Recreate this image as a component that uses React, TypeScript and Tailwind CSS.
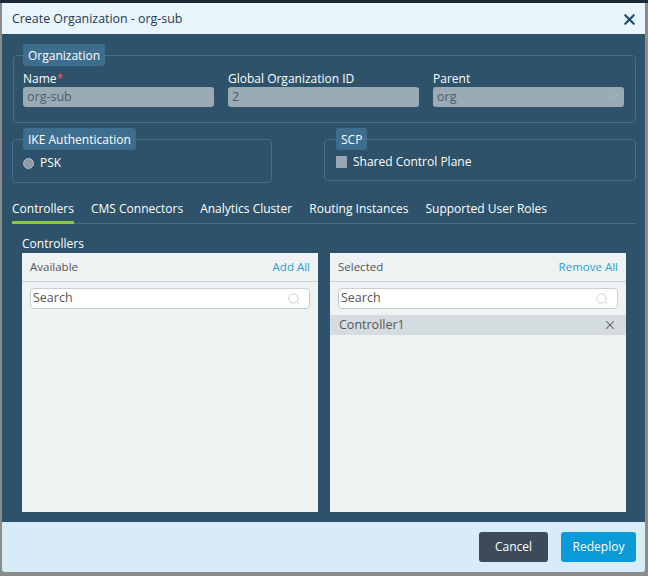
import { X, Search, ChevronDown } from 'lucide-react'

const tabs = ['Controllers', 'CMS Connectors', 'Analytics Cluster', 'Routing Instances', 'Supported User Roles']

function Field({ label, value, required, select }: { label: string; value: string; required?: boolean; select?: boolean }) {
  return (
    <div className="flex flex-col">
      <label className="text-[12px] leading-[16px] text-white">
        {label}
        {required && <span className="text-[#e8566b]">*</span>}
      </label>
      <div className="h-[20px] rounded-[3px] bg-[#9aabb6] px-[4px] flex items-center justify-between text-[12.5px] text-[#4b5e6b]">
        <span>{value}</span>
        {select && <ChevronDown size={12} className="text-[#aab8c1]" />}
      </div>
    </div>
  )
}

function ListPanel({ title, action, items }: { title: string; action: string; items: string[] }) {
  return (
    <div className="flex flex-col bg-[#eef2f3]">
      <div className="h-[29px] px-[8px] flex items-center justify-between border-b border-[#c9d0d4] text-[11.5px]">
        <span className="text-[#555]">{title}</span>
        <span className="text-[#2b9ed8]">{action}</span>
      </div>
      <div className="mx-[8px] mt-[6px] h-[21px] bg-white border border-[#c8cfd3] rounded-[4px] flex items-center justify-between pl-[2px] pr-[8px]">
        <span className="text-[12.5px] text-[#555]">Search</span>
        <Search size={14} strokeWidth={1.1} className="text-[#b4bcc1]" />
      </div>
      <div className="mt-[6px] flex flex-col">
        {items.map((it) => (
          <div key={it} className="h-[20px] bg-[#d4dcdf] pl-[9px] pr-[9px] flex items-center justify-between text-[12.5px] text-[#555]">
            <span>{it}</span>
            <X size={14} strokeWidth={1.8} className="text-[#555]" />
          </div>
        ))}
      </div>
    </div>
  )
}

export default function App() {
  return (
    <div
      className="w-[648px] h-[576px] bg-[#8b8b8b] border-t-[3px] border-[#1b2a36] pl-[2px] pr-[3px] pb-[4px]"
      style={{ fontFamily: '"Open Sans", "Noto Sans", sans-serif' }}
    >
      <div className="h-full flex flex-col rounded-b-[3px] overflow-hidden">
        {/* Header */}
        <div className="h-[31px] shrink-0 bg-[#e9f5fc] pl-[10px] pr-[7px] pt-[1px] flex items-center justify-between">
          <span className="text-[12.4px] text-[#1d3a52]">Create Organization - org-sub</span>
          <X size={17} strokeWidth={3} className="text-[#1a4d6e]" />
        </div>

        {/* Body */}
        <div className="flex-1 bg-[#2d5269] pl-[10px] pr-[9px] pt-[10px]">
          <fieldset className="ml-[1px] border border-[#41708c] rounded-[4px] pl-[9px] pr-[11px] pb-[15px]">
            <legend className="h-[22px] px-[5px] pt-[1px] rounded-[3px] bg-[#3e6e8d] text-[12px] leading-[21px] text-white">
              Organization
            </legend>
            <div className="grid grid-cols-3 gap-x-[14px] pt-[5px]">
              <Field label="Name" value="org-sub" required />
              <Field label="Global Organization ID" value="2" />
              <Field label="Parent" value="org" select />
            </div>
          </fieldset>

          <div className="mt-[5px] flex justify-between items-start">
            <fieldset className="w-[260px] border border-[#41708c] rounded-[4px] pl-[10px] pb-[11px]">
              <legend className="h-[22px] px-[5px] pt-[1px] rounded-[3px] bg-[#3e6e8d] text-[12px] leading-[21px] text-white">
                IKE Authentication
              </legend>
              <div className="pt-[5px] flex items-center gap-[6px] text-[12px] leading-[16px] text-white">
                <span className="w-[11px] h-[11px] rounded-full bg-[#8e9ba4] border border-[#b3bcc2]" />
                PSK
              </div>
            </fieldset>
            <fieldset className="w-[312px] border border-[#41708c] rounded-[4px] pl-[11px] pb-[10px]">
              <legend className="h-[22px] px-[5px] pt-[1px] rounded-[3px] bg-[#3e6e8d] text-[12px] leading-[21px] text-white">
                SCP
              </legend>
              <div className="pt-[4px] flex items-center gap-[6px] text-[12px] leading-[16px] text-white">
                <span className="w-[11px] h-[12px] rounded-[1px] bg-[#9aa8b1]" />
                Shared Control Plane
              </div>
            </fieldset>
          </div>

          {/* Tabs */}
          <div className="mt-[18px] border-b border-[#46718c] flex gap-[17px]">
            {tabs.map((t, i) => (
              <div
                key={t}
                className={
                  'pb-[4px] border-b-[3px] -mb-[1px] text-[12px] leading-[16px] text-white ' +
                  (i === 0 ? 'border-[#8cc63f]' : 'border-transparent')
                }
              >
                {t}
              </div>
            ))}
          </div>

          <div className="px-[10px]">
            <div className="mt-[12px] text-[12px] leading-[16px] text-white">Controllers</div>
            <div className="mt-[1px] h-[259px] grid grid-cols-2 gap-[12px]">
              <ListPanel title="Available" action="Add All" items={[]} />
              <ListPanel title="Selected" action="Remove All" items={['Controller1']} />
            </div>
          </div>
        </div>

        {/* Footer */}
        <div className="h-[50px] shrink-0 bg-[#d7ecf7] pr-[9px] flex items-center justify-end gap-[13px]">
          <button className="h-[30px] w-[69px] rounded-[3px] bg-[#3c4a5a] text-[12px] text-white">Cancel</button>
          <button className="h-[30px] w-[75px] rounded-[3px] bg-[#0b9ad8] text-[12px] text-white">Redeploy</button>
        </div>
      </div>
    </div>
  )
}
